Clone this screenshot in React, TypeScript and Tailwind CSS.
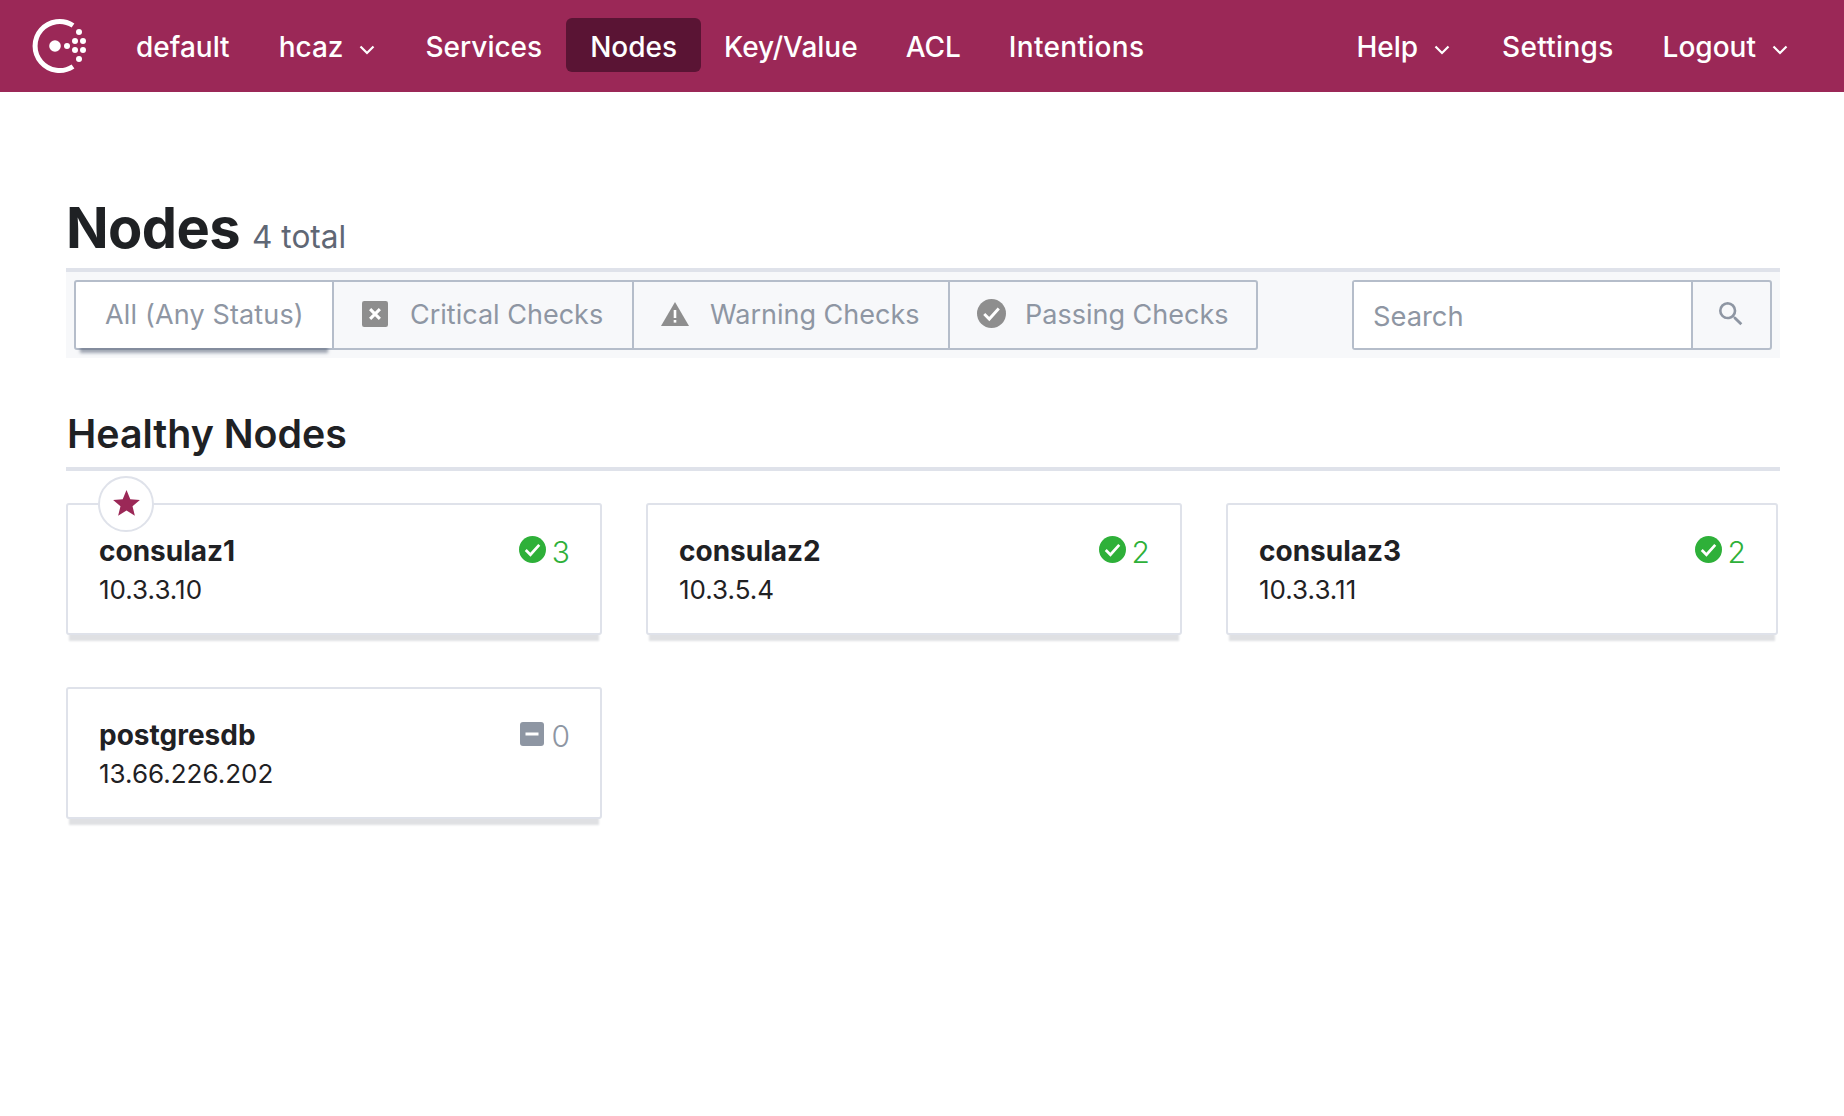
const font = 'font-["Inter","Noto_Sans",sans-serif]';

const Chevron = () => (
  <svg width="16" height="10" viewBox="0 0 16 10" fill="none" className="ml-[16px] mr-[2px] mt-[6px]">
    <path d="M1.5 1.5L8 8l6.5-6.5" stroke="white" strokeWidth="2.2" />
  </svg>
);

const NavItem = ({ label, chevron, active, className }: { label: string; chevron?: boolean; active?: boolean; className?: string }) => (
  <a
    className={`flex items-center h-[54px] -mt-[2px] pt-[4px] px-[24px] rounded-[6px] text-[28px] font-medium text-white ${
      active ? 'bg-[#5a1434]' : ''
    } ${className ?? ''}`}
  >
    {label}
    {chevron && <Chevron />}
  </a>
);

const Logo = () => (
  <svg width="58" height="56" viewBox="0 0 58 56" fill="none">
    <path d="M44 7.5A24.5 24.5 0 1 0 44 48.5" stroke="white" strokeWidth="5" strokeLinecap="butt" />
    <circle cx="26" cy="28" r="5.8" fill="white" />
    <circle cx="38" cy="28" r="3" fill="white" />
    <circle cx="50" cy="14" r="3" fill="white" />
    <circle cx="46" cy="23" r="3" fill="white" />
    <circle cx="54" cy="23" r="3" fill="white" />
    <circle cx="46" cy="32" r="3" fill="white" />
    <circle cx="54" cy="32" r="3" fill="white" />
    <circle cx="50" cy="41" r="3" fill="white" />
  </svg>
);

const CheckCircle = ({ color, size }: { color: string; size: number }) => (
  <svg width={size} height={size} viewBox="0 0 26 26">
    <circle cx="13" cy="13" r="13" fill={color} />
    <path d="M6.5 13.5l4.5 4.5 8.5-9.5" fill="none" stroke="white" strokeWidth="2.6" />
  </svg>
);

const FilterTab = ({ label, icon, selected, className }: { label: string; icon?: React.ReactNode; selected?: boolean; className: string }) => (
  <div
    className={`flex items-center h-full text-[27px] text-[#8e96a3] ${className} ${
      selected ? 'bg-white shadow-[0_9px_3px_-4px_rgba(90,100,120,0.55)]' : ''
    }`}
  >
    {icon}
    {label}
  </div>
);

const nodes = [
  { name: 'consulaz1', addr: '10.3.3.10', count: 3, leader: true, width: 'w-[536px]' },
  { name: 'consulaz2', addr: '10.3.5.4', count: 2, width: 'w-[536px]' },
  { name: 'consulaz3', addr: '10.3.3.11', count: 2, width: 'w-[552px]' },
  { name: 'postgresdb', addr: '13.66.226.202', count: 0, width: 'w-[536px]' },
];

const NodeCard = ({ node }: { node: (typeof nodes)[number] }) => (
  <div
    className={`relative h-[132px] ${node.width} bg-white border-2 border-[#dfe2ea] rounded-[3px] pl-[31px] pr-[30px] pt-[28px] shadow-[0_9px_2px_-3px_#dfe0e3]`}
  >
    {node.leader && (
      <div className="absolute left-[30px] top-[-29px] flex items-center justify-center w-[56px] h-[56px] rounded-full bg-white border-2 border-[#dfe2ea]">
        <svg width="29" height="29" viewBox="0 0 26 26" className="mb-[1px]">
          <path d="M13 1l3.4 8.2 8.6.6-6.6 5.6 2.1 8.6L13 19.3 5.5 24l2.1-8.6L1 9.8l8.6-.6z" fill="#9b2857" />
        </svg>
      </div>
    )}
    <div className="flex justify-between">
      <span className="text-[28px] leading-[36px] font-bold text-[#1f2124]">{node.name}</span>
      <span className={`flex items-center gap-[6px] pt-[1px] text-[30px] leading-[36px] font-light ${node.count ? 'text-[#2eb039]' : 'text-[#8e96a3]'}`}>
        {node.count ? (
          <span className="mb-[5px]">
            <CheckCircle color="#2eb039" size={27} />
          </span>
        ) : (
          <svg width="24" height="24" viewBox="0 0 24 24" className="mb-[4px] mr-[1px]">
            <rect width="24" height="24" rx="3" fill="#8e96a3" />
            <rect x="5.5" y="10.5" width="13" height="3" fill="white" />
          </svg>
        )}
        {node.count}
      </span>
    </div>
    <p className="mt-[2px] text-[26px] leading-[36px] text-[#1f2124] font-normal">{node.addr}</p>
  </div>
);

const App = () => (
  <div className={`min-h-[1116px] bg-white ${font}`}>
    <header className="flex items-center h-[92px] bg-[#9b2857] pl-[29px] pr-[30px]">
      <Logo />
      <nav className="flex items-center ml-[25px]">
        <NavItem label="default" className="mr-[1px]" />
        <NavItem label="hcaz" chevron />
        <NavItem label="Services" />
        <NavItem label="Nodes" active className="-mr-[1px]" />
        <NavItem label="Key/Value" />
        <NavItem label="ACL" />
        <NavItem label="Intentions" className="tracking-[0.3px]" />
      </nav>
      <nav className="flex items-center ml-auto">
        <NavItem label="Help" chevron className="mr-[2px]" />
        <NavItem label="Settings" className="tracking-[0.3px] mr-[1px]" />
        <NavItem label="Logout" chevron />
      </nav>
    </header>

    <main className="pl-[66px] pr-[64px]">
      <div className="flex items-baseline gap-[12px] mt-[112px] h-[64px]">
        <h1 className="text-[56px] leading-[48px] font-bold text-[#1f2124] tracking-[-0.6px]">Nodes</h1>
        <span className="text-[31.6px] leading-[48px] text-[#5f6775]">4 total</span>
      </div>
      <div className="flex justify-between h-[90px] bg-[#f7f8fa] border-t-4 border-[#dfe2ea] px-[8px] py-[8px]">
        <div className="flex h-[70px] border-2 border-[#b5bdca] rounded-[3px]">
          <FilterTab selected label="All (Any Status)" className="w-[256px] pl-[29px] tracking-[0.15px] rounded-l-[2px]" />
          <FilterTab
            label="Critical Checks"
            className="w-[300px] border-l-2 border-[#b5bdca] pl-[28px]"
            icon={
              <svg width="26" height="26" viewBox="0 0 24 24" className="mr-[22px] mb-[3px]">
                <rect width="24" height="24" rx="2" fill="#8e8e8e" />
                <path d="M7.5 7.5l9 9M16.5 7.5l-9 9" stroke="white" strokeWidth="2.8" />
              </svg>
            }
          />
          <FilterTab
            label="Warning Checks"
            className="w-[316px] border-l-2 border-[#b5bdca] pl-[27px]"
            icon={
              <svg width="28" height="24" viewBox="0 0 28 24" className="mr-[21px] mb-[2px]">
                <path d="M14 0L28 24H0z" fill="#8e8e8e" />
                <rect x="12.7" y="8" width="2.6" height="8" fill="white" />
                <rect x="12.7" y="18" width="2.6" height="2.6" fill="white" />
              </svg>
            }
          />
          <FilterTab
            label="Passing Checks"
            className="w-[308px] border-l-2 border-[#b5bdca] pl-[27px]"
            icon={
              <span className="mr-[19px] mb-[3px]">
                <CheckCircle color="#8e8e8e" size={29} />
              </span>
            }
          />
        </div>
        <div className="flex h-[70px] w-[420px] border-2 border-[#b5bdca] rounded-[3px]">
          <div className="flex-1 flex items-center bg-white pl-[19px] pt-[4px] text-[27.3px] text-[#8e96a3]">Search</div>
          <div className="flex items-center justify-center w-[79px] border-l-2 border-[#b5bdca]">
            <svg width="32" height="32" viewBox="0 0 24 24" className="mb-[2px] mr-[1px]" fill="#8e96a3">
              <path d="M15.5 14h-.79l-.28-.27A6.471 6.471 0 0 0 16 9.5 6.5 6.5 0 1 0 9.5 16c1.61 0 3.09-.59 4.23-1.57l.27.28v.79l5 4.99L20.49 19l-4.99-5zm-6 0C7.01 14 5 11.99 5 9.5S7.01 5 9.5 5 14 7.01 14 9.5 11.99 14 9.5 14z" />
            </svg>
          </div>
        </div>
      </div>

      <h2 className="mt-[51px] pl-[1px] text-[39.3px] leading-[50px] font-semibold text-[#1f2124] border-b-4 border-[#dfe2ea] pb-[8px]">
        Healthy Nodes
      </h2>
      <div className="flex flex-wrap gap-x-[44px] gap-y-[52px] mt-[32px]">
        {nodes.map((node) => (
          <NodeCard key={node.name} node={node} />
        ))}
      </div>
    </main>
  </div>
);

export default App;
